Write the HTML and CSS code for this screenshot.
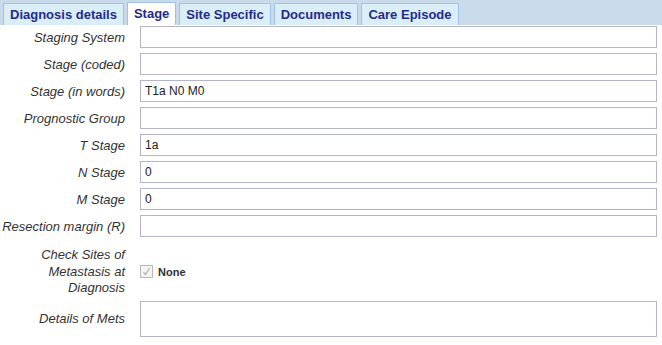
FILE: index.html
```html
<!DOCTYPE html>
<html lang="en">
<head>
  <meta charset="UTF-8">
  <title>Stage</title>
  <link rel="stylesheet" href="styles.css">
</head>
<body>
  <div class="tabs">
    <div class="tab">Diagnosis details</div>
    <div class="tab active">Stage</div>
    <div class="tab">Site Specific</div>
    <div class="tab">Documents</div>
    <div class="tab">Care Episode</div>
  </div>

  <div class="form">
    <div class="row">
      <label>Staging System</label>
      <input type="text" value="">
    </div>
    <div class="row">
      <label>Stage (coded)</label>
      <input type="text" value="">
    </div>
    <div class="row">
      <label>Stage (in words)</label>
      <input type="text" value="T1a N0 M0">
    </div>
    <div class="row">
      <label>Prognostic Group</label>
      <input type="text" value="">
    </div>
    <div class="row">
      <label>T Stage</label>
      <input type="text" value="1a">
    </div>
    <div class="row">
      <label>N Stage</label>
      <input type="text" value="0">
    </div>
    <div class="row">
      <label>M Stage</label>
      <input type="text" value="0">
    </div>
    <div class="row">
      <label>Resection margin (R)</label>
      <input type="text" value="">
    </div>
    <div class="row check-row">
      <label>Check Sites of<br>Metastasis at<br>Diagnosis</label>
      <div class="check">
        <span class="box">
          <svg width="9" height="9" viewBox="0 0 9 9"><path d="M1.5 5 L3.5 7.5 L7.5 1" fill="none" stroke="#b8b8b8" stroke-width="1.3"/></svg>
        </span>
        <span class="check-label">None</span>
      </div>
    </div>
    <div class="row area-row">
      <label>Details of Mets</label>
      <textarea></textarea>
    </div>
  </div>
</body>
</html>
```

FILE: styles.css
```css
body {
  margin: 0;
  font-family: "Liberation Sans", Arial, sans-serif;
  background: #fff;
}

.tabs {
  display: flex;
  align-items: flex-end;
  gap: 3px;
  height: 25px;
  padding-left: 3px;
  background: #c9dbeb;
  box-sizing: border-box;
}

.tab {
  height: 22px;
  padding: 0 6px;
  box-sizing: border-box;
  background: #daeef8;
  border: 1px solid #9fc1ea;
  border-bottom: none;
  color: #1f2b8a;
  font-size: 13px;
  font-weight: bold;
  line-height: 21px;
}

.tab.active {
  height: 23px;
  background: #fff;
}

.form {
  padding: 1px 5px 0 0;
}

.row {
  display: flex;
  align-items: center;
  gap: 15px;
  margin-bottom: 5px;
}

.row label {
  width: 125px;
  flex: none;
  text-align: right;
  font-size: 13px;
  font-style: italic;
  color: #333;
}

.row input,
.row textarea {
  flex: 1;
  height: 22px;
  box-sizing: border-box;
  margin: 0;
  border: 1px solid #b5b5c9;
  padding: 0 4px;
  font-family: "Liberation Sans", Arial, sans-serif;
  font-size: 12px;
  color: #222;
  outline: none;
}

.check-row {
  padding-top: 5px;
  margin-bottom: 4px;
}

.check-row label {
  line-height: 16.5px;
}

.check {
  display: flex;
  align-items: center;
  gap: 5px;
}

.box {
  width: 11px;
  height: 11px;
  border: 1px solid #b8b8b8;
  background: #f4f4f4;
  display: flex;
  align-items: center;
  justify-content: center;
}

.check-label {
  font-size: 11px;
  font-weight: bold;
  color: #333;
}

.row textarea {
  height: 36px;
  resize: none;
}
```
